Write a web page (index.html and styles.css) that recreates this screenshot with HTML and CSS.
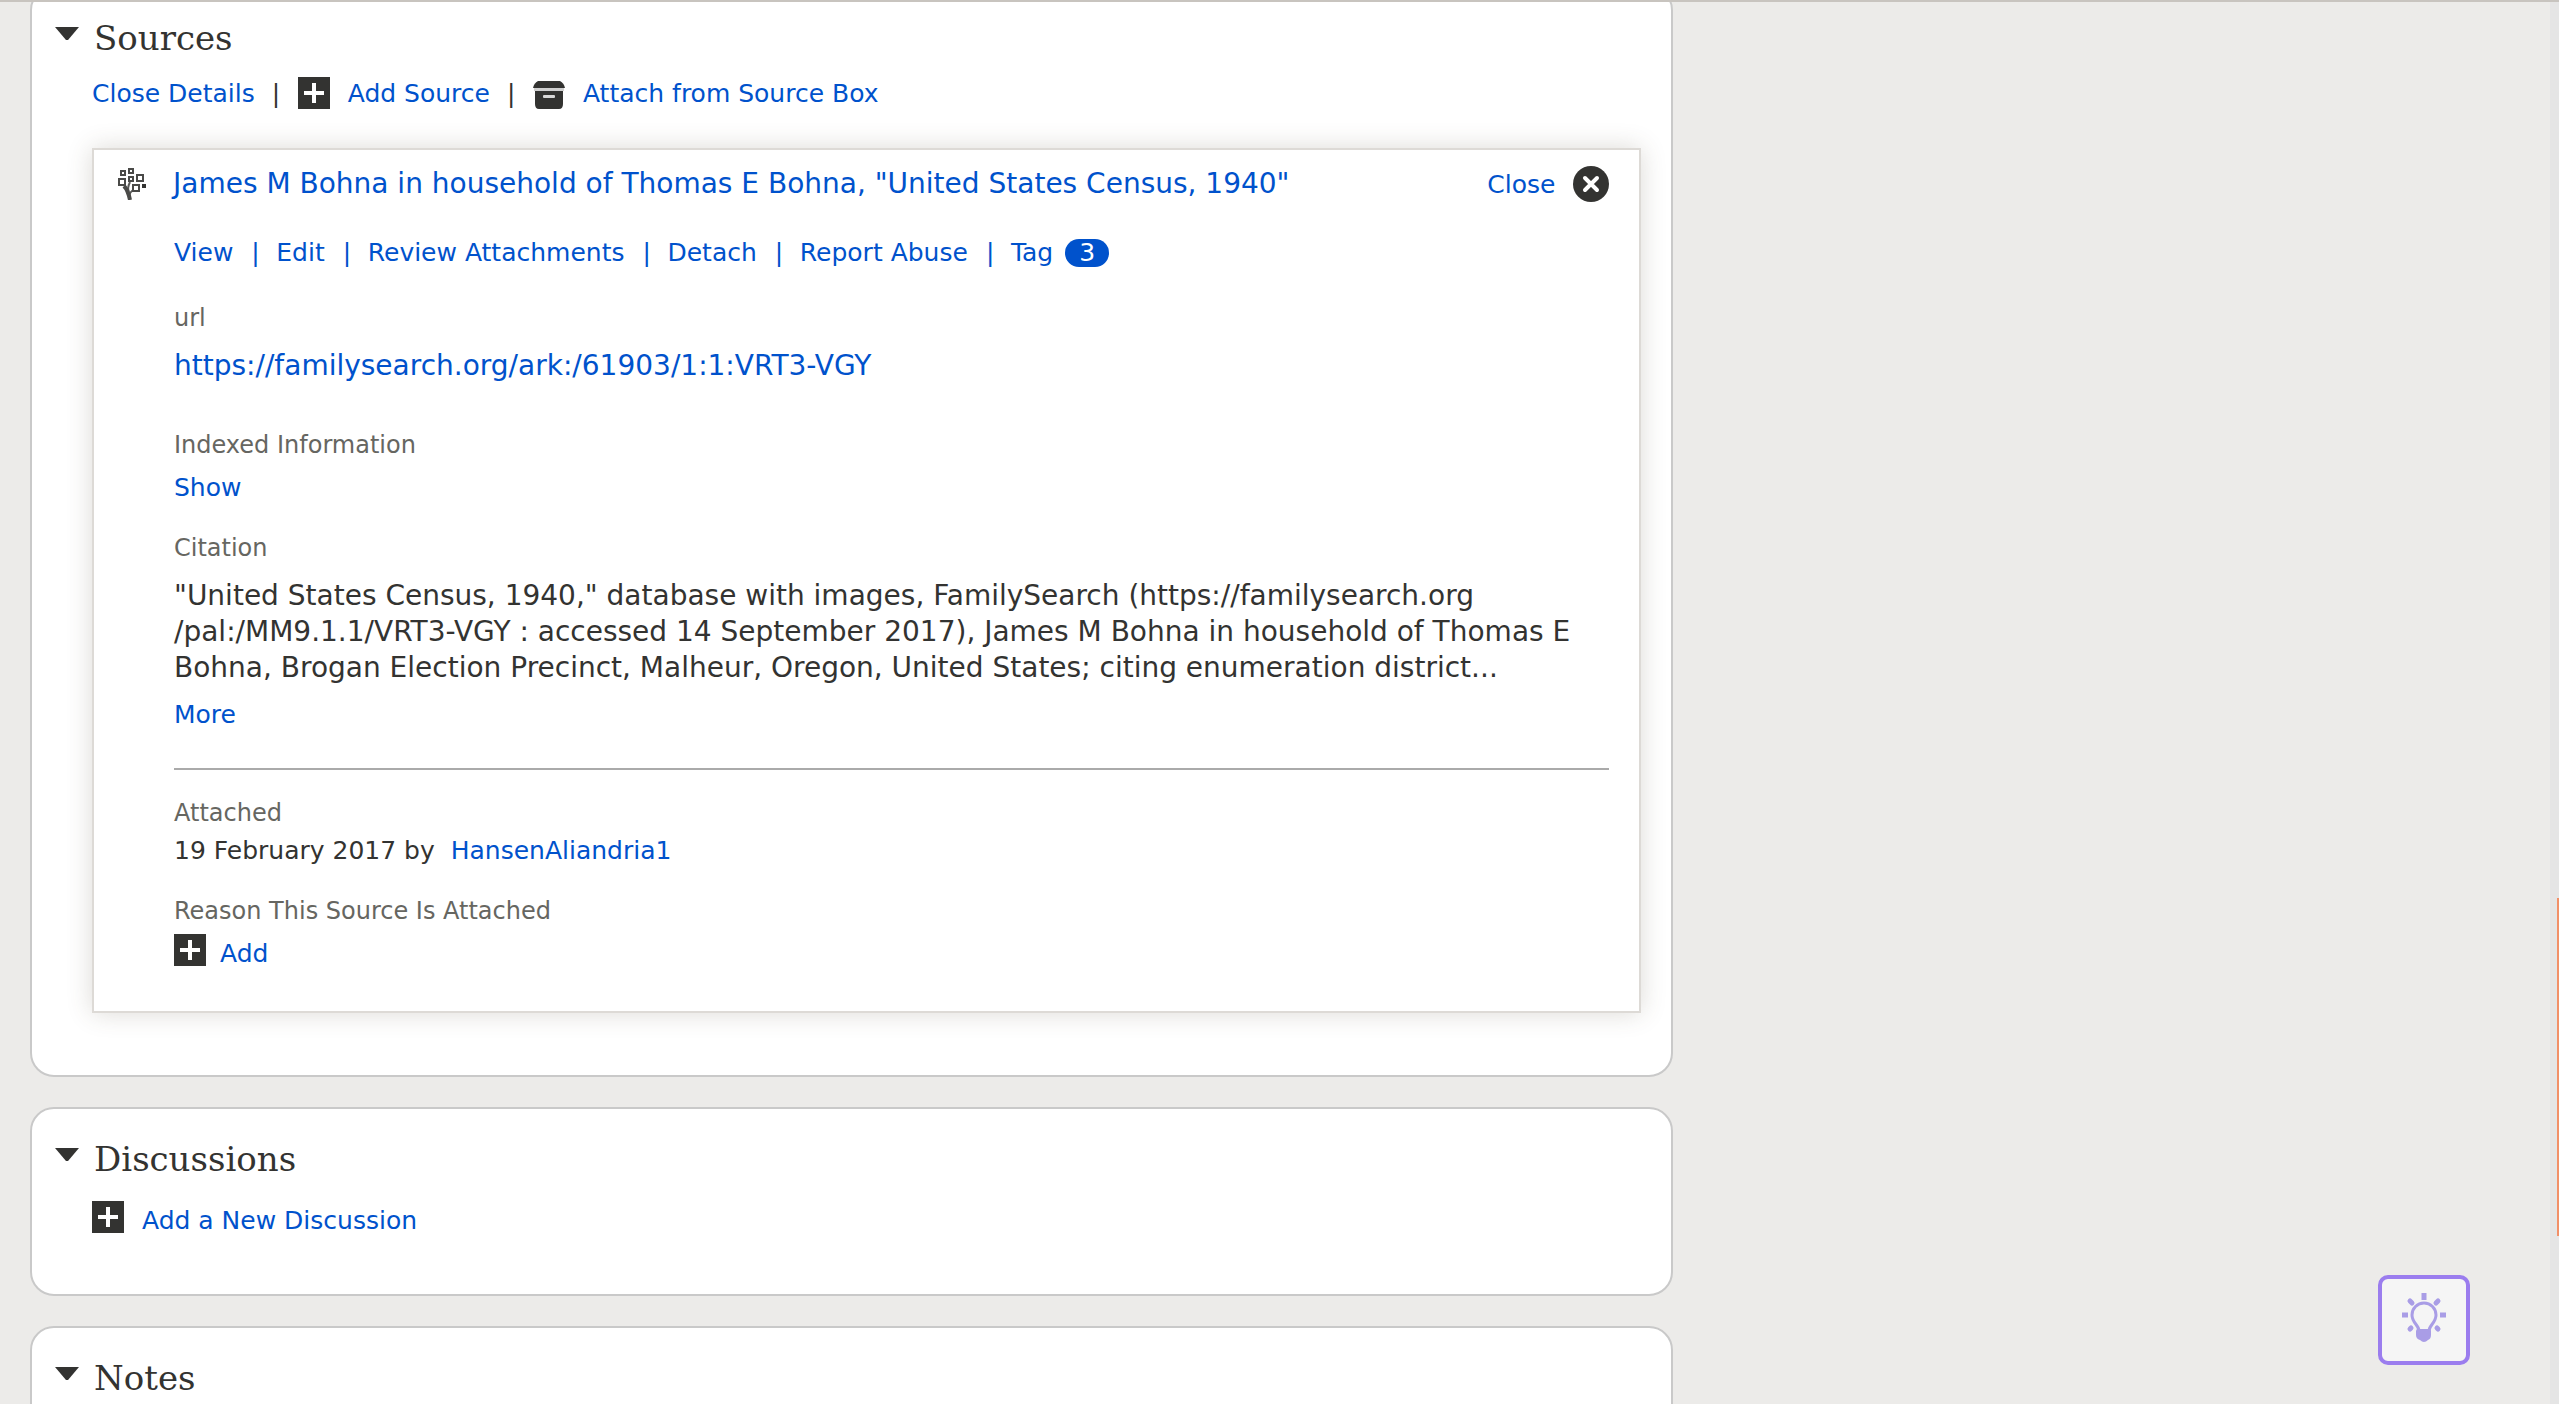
FILE: index.html
```html
<!DOCTYPE html>
<html lang="en">
<head>
<meta charset="utf-8">
<title>Sources</title>
<link rel="stylesheet" href="styles.css">
</head>
<body>
<svg class="sprite" aria-hidden="true">
  <symbol id="plus" viewBox="0 0 32 32">
    <path fill="#333331" d="M0 0h32v32H0z"/>
    <path d="M16 6v20M6 16h20" stroke="#fff" stroke-width="4" fill="none"/>
  </symbol>
  <symbol id="arrow" viewBox="0 0 24 13">
    <path fill="#333331" d="M0 0h24L13 13h-2z"/>
  </symbol>
</svg>

<div class="page">
  <main class="column">
    <section class="panel">
      <h2 class="panel-title"><svg class="arrow"><use href="#arrow"/></svg>Sources</h2>
      <div class="panel-body">
        <nav class="actions">
          <a href="#">Close Details</a>
          <span class="bar">|</span>
          <a href="#" class="icon-link"><svg class="icon"><use href="#plus"/></svg>Add Source</a>
          <span class="bar">|</span>
          <a href="#" class="icon-link">
            <svg class="icon" viewBox="0 0 32 32">
              <path fill="#333331" d="M5 4h22q4 2 5 7H0q1-5 5-7z"/>
              <path fill="#d0d0d0" d="M1 11h30v3H1z"/>
              <path fill="#333331" d="M2 14h28v13q0 5-4 5H6q-4 0-4-5z"/>
              <rect x="10" y="18" width="12" height="3" rx="1" fill="#d8d8d8"/>
            </svg>Attach from Source Box</a>
        </nav>

        <article class="card">
          <header class="card-head">
            <svg class="tree" viewBox="0 0 28 32">
              <path fill="none" stroke="#5a5a58" stroke-width="2" d="M12 14q-3 6-1 10M15 22q-3 2-4 6"/>
              <path fill="none" stroke="#4a4a48" stroke-width="4" d="M6 18q4 4 6 14"/>
              <path fill="#fff" stroke="#4a4a48" stroke-width="2" d="M3 3h4v4H3zM11 1h4v4h-4zM19 7h6v6h-6zM1 11h6v6H1zM11 9h4v4h-4zM15 17h6v6h-6z"/>
              <path fill="#333331" d="M24 16h4v4h-4z"/>
            </svg>
            <h3 class="card-title"><a href="#">James M Bohna in household of Thomas E Bohna, "United States Census, 1940"</a></h3>
            <button type="button" class="close">Close
              <svg class="close-icon" viewBox="0 0 36 36">
                <circle cx="18" cy="18" r="18" fill="#333331"/>
                <path d="M12 12l12 12M24 12L12 24" stroke="#fff" stroke-width="4" stroke-linecap="round"/>
              </svg>
            </button>
          </header>
          <div class="card-body">
            <nav class="links">
              <a href="#">View</a><span>|</span>
              <a href="#">Edit</a><span>|</span>
              <a href="#">Review Attachments</a><span>|</span>
              <a href="#">Detach</a><span>|</span>
              <a href="#">Report Abuse</a><span>|</span>
              <a href="#" class="tag">Tag <b class="badge">3</b></a>
            </nav>
            <h4 class="label">url</h4>
            <p class="url"><a href="#">https://familysearch.org/ark:/61903/1:1:VRT3-VGY</a></p>
            <h4 class="label">Indexed Information</h4>
            <p class="show"><a href="#">Show</a></p>
            <h4 class="label">Citation</h4>
            <p class="citation">"United States Census, 1940," database with images, FamilySearch (https://familysearch.org<br>/pal:/MM9.1.1/VRT3-VGY : accessed 14 September 2017), James M Bohna in household of Thomas E Bohna, Brogan Election Precinct, Malheur, Oregon, United States; citing enumeration district...</p>
            <p class="more"><a href="#">More</a></p>
            <hr class="rule">
            <h4 class="label">Attached</h4>
            <p class="attached">19 February 2017 by <a href="#">HansenAliandria1</a></p>
            <h4 class="label">Reason This Source Is Attached</h4>
            <a href="#" class="add-link reason"><svg class="icon"><use href="#plus"/></svg><span>Add</span></a>
          </div>
        </article>
      </div>
    </section>

    <section class="panel">
      <h2 class="panel-title"><svg class="arrow"><use href="#arrow"/></svg>Discussions</h2>
      <div class="panel-body">
        <a href="#" class="add-link discussion"><svg class="icon"><use href="#plus"/></svg><span>Add a New Discussion</span></a>
      </div>
    </section>

    <section class="panel">
      <h2 class="panel-title"><svg class="arrow"><use href="#arrow"/></svg>Notes</h2>
    </section>
  </main>
</div>

<div class="top-line"></div>
<div class="edge"><div class="edge-mark"></div></div>
<button type="button" class="hint" aria-label="Tips">
  <svg class="bulb" viewBox="0 0 44 50">
    <path fill="none" stroke="#a99de6" stroke-width="3" d="M17 38c0-6-7-8-7-16a12 12 0 0 1 24 0c0 8-7 10-7 16"/>
    <path fill="#a99de6" d="M16 36h11q2 0 2 2v4q0 4-3 5-2 2-4 2t-4-2q-4-1-4-5v-4q0-2 2-2z"/>
    <path stroke="#a99de6" stroke-width="5" d="M22 0v7M0 22h6M38 22h6"/>
    <path stroke="#a99de6" stroke-width="5" stroke-linecap="round" d="M8 8l2 2M36 8l-2 2M8 36l1-1M36 36l-1-1"/>
  </svg>
</button>
</body>
</html>
```
FILE: styles.css
```css
* {
  box-sizing: border-box;
}

body {
  margin: 0;
  height: 100vh;
  overflow: hidden;
  background: #ecebe9;
  color: #333331;
  font: 25px/32px "DejaVu Sans", sans-serif;
}

h2, h3, h4, p {
  margin: 0;
  font-weight: 400;
}

a {
  color: #0052cc;
  text-decoration: none;
}

button {
  font: inherit;
  cursor: pointer;
}

svg {
  display: block;
  flex: none;
}

.sprite {
  display: none;
}

.page {
  padding: 0 39px 0 30px;
}

/* the first panel is scrolled partly under the top line */
.column {
  display: flex;
  flex-direction: column;
  gap: 30px;
  width: 66%;
  margin-top: -14px;
}

.panel {
  padding: 30px 30px 57px 23px;
  border: 2px solid #c9c9c9;
  border-radius: 24px;
  background: #fff;
}

.panel-title {
  display: flex;
  gap: 15px;
  font: 34px/40px "DejaVu Serif", serif;
}

.arrow {
  width: 24px;
  height: 13px;
  margin-top: 9px;
}

.panel-body {
  padding-left: 37px;
}

.icon {
  width: 32px;
  height: 32px;
}

.actions {
  display: flex;
  align-items: center;
  gap: 17px;
  margin-top: 19px;
  line-height: 34px;
}

.bar {
  width: 9px;
}

.icon-link {
  display: flex;
  align-items: flex-start;
  gap: 18px;
}

.card {
  margin: 37px 0 5px;
  padding: 16px 30px 41px 24px;
  border: 2px solid #dddad6;
  background: #fff;
  box-shadow: 0 0 24px rgba(80, 70, 50, 0.2);
}

.card-head {
  display: flex;
  gap: 25px;
}

.tree {
  width: 28px;
  height: 32px;
  margin: 2px 2px 0 0;
}

.card-title {
  flex: 1;
  font-size: 28px;
  line-height: 36px;
}

.close {
  display: flex;
  align-items: flex-start;
  gap: 18px;
  padding: 0;
  border: 0;
  background: none;
  color: #0052cc;
  line-height: 38px;
}

.close-icon {
  width: 36px;
  height: 36px;
}

.card-body {
  padding-left: 56px;
}

.links {
  display: flex;
  gap: 18px;
  margin: 33px 0;
  color: #0052cc;
}

.links span {
  width: 7px;
}

.tag {
  display: flex;
  align-items: center;
  gap: 12px;
}

.badge {
  width: 44px;
  border-radius: 14px;
  background: #0052cc;
  color: #fff;
  font-weight: 400;
  line-height: 28px;
  text-align: center;
}

.label {
  color: #666661;
  font-size: 24px;
  line-height: 32px;
}

.url {
  margin: 14px 0 45px;
  font-size: 28px;
  line-height: 36px;
}

.show {
  margin: 11px 0 28px;
}

.citation {
  margin: 14px 0 13px;
  font-size: 28px;
  line-height: 36px;
}

.rule {
  height: 2px;
  margin: 37px 0 27px;
  border: 0;
  background: #aaa;
}

.attached {
  margin: 6px 0 28px;
}

.attached a {
  margin-left: 8px;
}

.add-link {
  display: flex;
  align-items: flex-start;
}

.add-link span {
  margin-top: 4px;
}

.reason {
  gap: 14px;
  margin-top: 7px;
}

.discussion {
  gap: 18px;
  margin-top: 22px;
}

.top-line {
  position: fixed;
  inset: 0 0 auto;
  height: 2px;
  background: #c8c4bf;
}

.edge {
  position: fixed;
  inset: 2px 0 0 auto;
  width: 9px;
  background: #e5e5e5;
}

.edge-mark {
  width: 2px;
  height: 338px;
  margin: 896px 0 0 auto;
  background: #f29068;
}

.hint {
  position: fixed;
  right: 89px;
  bottom: 39px;
  display: grid;
  place-items: center;
  width: 92px;
  height: 90px;
  padding: 0 0 4px;
  border: 4px solid #9b7dee;
  border-radius: 10px;
  background: #f5f5f5;
}

.bulb {
  width: 44px;
  height: 50px;
}
```
